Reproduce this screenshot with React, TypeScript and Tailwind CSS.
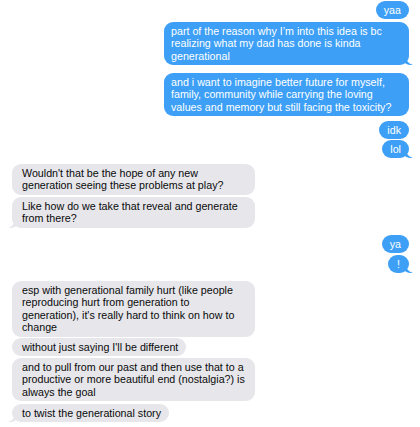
import React from "react";

type Msg = {
  me: boolean;
  lines: string[];
  mt: string;
  w?: string;
  tail?: boolean;
  px?: string;
};

const msgs: Msg[] = [
  { me: true, lines: ["yaa"], mt: "mt-[1px]" },
  {
    me: true,
    lines: [
      "part of the reason why I\u2019m into this idea is bc",
      "realizing what my dad has done is kinda",
      "generational",
    ],
    mt: "mt-[3px]",
    w: "w-[245px]",
    tail: true,
  },
  {
    me: true,
    lines: [
      "and i want to imagine better future for myself,",
      "family, community while carrying the loving",
      "values and memory but still facing the toxicity?",
    ],
    mt: "mt-[8px]",
    w: "w-[245px]",
  },
  { me: true, lines: ["idk"], mt: "mt-[5px]" },
  { me: true, lines: ["lol"], mt: "mt-[1px]", tail: true },
  {
    me: false,
    lines: ["Wouldn't that be the hope of any new", "generation seeing these problems at play?"],
    mt: "mt-[6px]",
    w: "w-[243px]",
  },
  {
    me: false,
    lines: ["Like how do we take that reveal and generate", "from there?"],
    mt: "mt-[2.5px]",
    w: "w-[243px]",
    tail: true,
  },
  { me: true, lines: ["ya"], mt: "mt-[7.5px]" },
  { me: true, lines: ["!"], mt: "mt-[2px]", tail: true, px: "px-[9px]" },
  {
    me: false,
    lines: [
      "esp with generational family hurt (like people",
      "reproducing hurt from generation to",
      "generation), it's really hard to think on how to",
      "change",
    ],
    mt: "mt-[8px]",
    w: "w-[243px]",
  },
  { me: false, lines: ["without just saying I'll be different"], mt: "mt-[1.5px]" },
  {
    me: false,
    lines: [
      "and to pull from our past and then use that to a",
      "productive or more beautiful end (nostalgia?) is",
      "always the goal",
    ],
    mt: "mt-[2px]",
    w: "w-[243px]",
  },
  { me: false, lines: ["to twist the generational story"], mt: "mt-[3px]", tail: true },
];

function Tail({ me }: { me: boolean }) {
  if (me) {
    return (
      <svg
        className="absolute bottom-0 right-[-5px]"
        width="9"
        height="10"
        viewBox="0 0 9 10"
      >
        <path d="M0 0 C1 5 3 8.5 8 10 C4.5 10.3 1.5 9.5 0 8 Z" fill="#3d9ff5" />
      </svg>
    );
  }
  return (
    <svg
      className="absolute bottom-0 left-[-5px]"
      width="9"
      height="10"
      viewBox="0 0 9 10"
    >
      <path d="M9 0 C8 5 6 8.5 1 10 C4.5 10.3 7.5 9.5 9 8 Z" fill="#e6e6eb" />
    </svg>
  );
}

function Bubble({ m }: { m: Msg }) {
  const single = m.lines.length === 1;
  const base =
    "relative rounded-[9px] py-[2.75px] text-[10.7px] leading-[12.5px] whitespace-nowrap";
  const color = m.me ? "bg-[#3d9ff5] text-white" : "bg-[#e6e6eb] text-[#0a0a0a]";
  const pad =
    m.px ??
    (m.me ? (single ? "px-[8px]" : "pl-[7px] pr-[8px]") : "pl-[10px] pr-[8px]");
  return (
    <div className={`flex ${m.me ? "justify-end" : "justify-start"} ${m.mt}`}>
      <div className={`${base} ${color} ${pad} ${m.w ?? ""}`}>
        {m.tail && <Tail me={m.me} />}
        <div className="relative">
          {m.lines.map((l, i) => (
            <div key={i}>{l}</div>
          ))}
        </div>
      </div>
    </div>
  );
}

export default function App() {
  return (
    <div
      className="w-[420px] h-[427px] bg-white overflow-hidden flex flex-col pl-[12px] pr-[11px]"
      style={{ fontFamily: '"Liberation Sans", Arial, sans-serif' }}
    >
      {msgs.map((m, i) => (
        <Bubble key={i} m={m} />
      ))}
    </div>
  );
}
